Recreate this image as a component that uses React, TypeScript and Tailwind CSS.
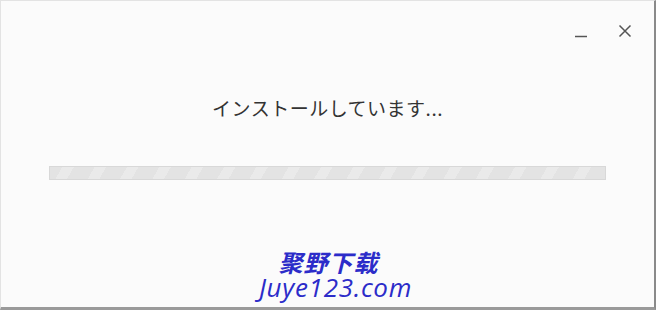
export default function App() {
  return (
    <div className="w-[656px] h-[310px] bg-[#fbfbfb] flex flex-col border-t border-l border-[#e3e3e3] border-r-2 border-r-[#8a8a8a] border-b-[3px] border-b-[#9a9a9a] overflow-hidden" style={{ fontFamily: '"Noto Sans CJK JP", "Noto Sans", sans-serif' }}>
      <div className="flex justify-end items-start h-[58px] pr-[22px] pt-[20px] gap-[30px]">
        <svg width="14" height="14" viewBox="0 0 14 14" className="mt-[4px]">
          <path d="M1 11.5h12" stroke="#555" strokeWidth="1.5" />
        </svg>
        <svg width="14" height="14" viewBox="0 0 14 14" className="mt-[3px]">
          <path d="M1.5 1.5l11 11M12.5 1.5l-11 11" stroke="#555" strokeWidth="1.5" />
        </svg>
      </div>
      <div className="flex justify-center text-[19px] text-[#333] leading-none mt-[39px] tracking-[0.5px]">
        インストールしています...
      </div>
      <div className="mx-[48px] mt-[49px] h-[14px] border border-[#d8d8d8] bg-[repeating-linear-gradient(-60deg,#e3e3e3_0px,#e3e3e3_18px,#eaeaea_18px,#eaeaea_28px)]" />
      <div className="flex flex-col items-center mt-[70px] text-[#2c2cc9] italic leading-none" style={{ fontFamily: '"Noto Sans CJK SC", "Noto Sans", sans-serif' }}>
        <div className="text-[24px] font-bold tracking-[1px] ml-[2px]">聚野下载</div>
        <div className="text-[26px] ml-[16px] tracking-[0.7px]" style={{ fontFamily: '"Open Sans", sans-serif' }}>Juye123.com</div>
      </div>
    </div>
  );
}
